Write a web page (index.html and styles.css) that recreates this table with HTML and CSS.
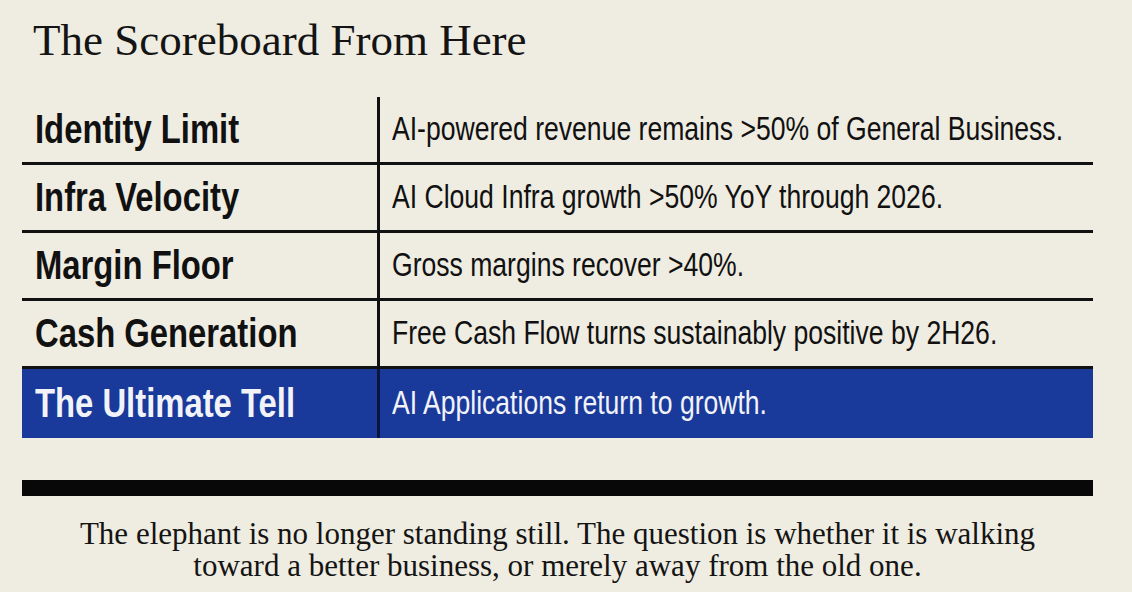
FILE: index.html
```html
<!DOCTYPE html>
<html lang="en">
<head>
<meta charset="utf-8">
<title>The Scoreboard From Here</title>
<link rel="stylesheet" href="styles.css">
</head>
<body>
<main class="page">
  <h1 class="title">The Scoreboard From Here</h1>
  <div class="board">
    <div class="row">
      <div class="label"><span class="narrow">Identity Limit</span></div>
      <div class="desc"><span class="narrow">AI-powered revenue remains &gt;50% of General Business.</span></div>
    </div>
    <div class="row">
      <div class="label"><span class="narrow">Infra Velocity</span></div>
      <div class="desc"><span class="narrow">AI Cloud Infra growth &gt;50% YoY through 2026.</span></div>
    </div>
    <div class="row">
      <div class="label"><span class="narrow">Margin Floor</span></div>
      <div class="desc"><span class="narrow">Gross margins recover &gt;40%.</span></div>
    </div>
    <div class="row">
      <div class="label"><span class="narrow">Cash Generation</span></div>
      <div class="desc"><span class="narrow">Free Cash Flow turns sustainably positive by 2H26.</span></div>
    </div>
    <div class="row row-highlight">
      <div class="label"><span class="narrow">The Ultimate Tell</span></div>
      <div class="desc"><span class="narrow">AI Applications return to growth.</span></div>
    </div>
  </div>
  <div class="rule"></div>
  <p class="closing">The elephant is no longer standing still. The question is whether it is walking<br>toward a better business, or merely away from the old one.</p>
</main>
</body>
</html>
```

FILE: styles.css
```css
* { box-sizing: border-box; }
html, body { margin: 0; padding: 0; }
body {
  background: #efece1;
  color: #111;
  width: 1132px;
  height: 592px;
  overflow: hidden;
}
.page {
  padding: 18px 39px 0 22px;
  display: flex;
  flex-direction: column;
}
.title {
  margin: 0 0 34px 11px;
  font-family: "Liberation Serif", "Times New Roman", serif;
  font-weight: normal;
  font-size: 45px;
  line-height: 45px;
  color: #141414;
}
.board {
  display: flex;
  flex-direction: column;
}
.row {
  display: grid;
  grid-template-columns: 355px 1fr;
  height: 68px;
  border-bottom: 3px solid #111;
}
.row-highlight {
  height: 69px;
  border-bottom: 0;
  background: #193a9b;
  color: #f2f3f8;
}
.label,
.desc {
  display: flex;
  align-items: center;
  overflow: hidden;
  white-space: nowrap;
  font-family: "Liberation Sans", Arial, sans-serif;
}
.label {
  padding-left: 13px;
  font-weight: bold;
  font-size: 40px;
}
.desc {
  padding-left: 12px;
  border-left: 3px solid #111;
  font-size: 32.4px;
}
.narrow {
  display: inline-block;
  transform: scaleX(0.82);
  transform-origin: left center;
}
.row-highlight .desc { border-left-color: #0b1640; }
.rule {
  margin-top: 42px;
  height: 16px;
  background: #080808;
}
.closing {
  margin: 22px 0 0;
  text-align: center;
  font-family: "Liberation Serif", "Times New Roman", serif;
  font-size: 31px;
  line-height: 32px;
  color: #141414;
}
```
